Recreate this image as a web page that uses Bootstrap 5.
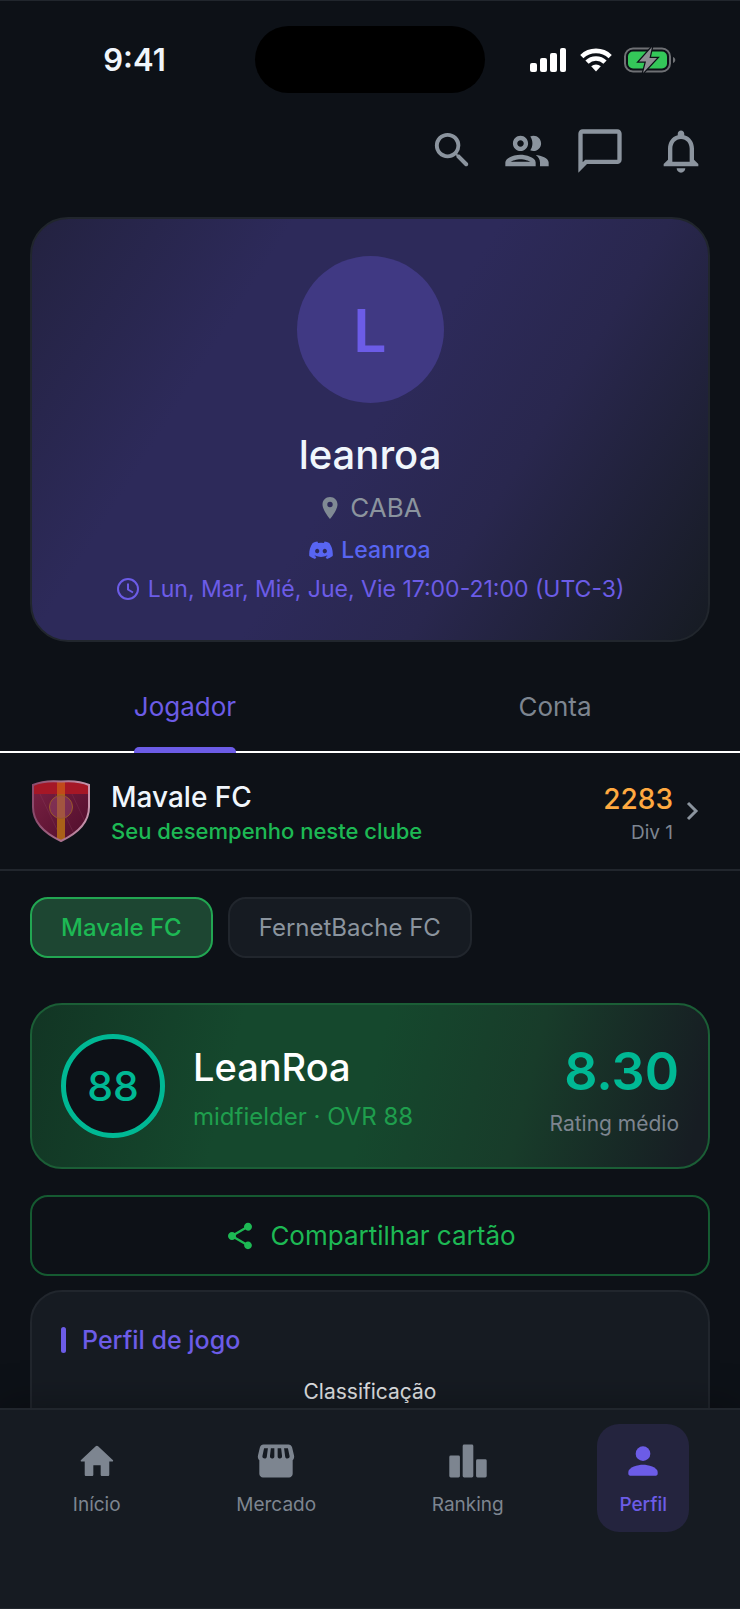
<!DOCTYPE html>
<html lang="pt-BR">
<head>
<meta charset="utf-8">
<meta name="viewport" content="width=device-width, initial-scale=1">
<title>Perfil</title>
<link href="https://cdn.jsdelivr.net/npm/bootstrap@5.3.0/dist/css/bootstrap.min.css" rel="stylesheet">
<style>
:root{--bg:#0d1117;--surface:#161b22;--line:#21262d;--accent:#6c5ce7;--muted:#8b949e;--dim:#7d8590;--green:#1db954;--teal:#00b894}
body{background:var(--bg);color:#f0f6fc;font-family:Inter,"Liberation Sans",sans-serif;font-size:24px;line-height:32px;border-top:1px solid var(--line)}
svg{display:block;flex:none}
button{font:inherit}
.gutter{padding-left:30px;padding-right:30px}
.t-accent{color:var(--accent)}.t-muted{color:var(--muted)}.t-dim{color:var(--dim)}.t-green{color:var(--green)}.t-teal{color:var(--teal)}
.w-5{font-weight:500}
.fs-xs{font-size:19px;line-height:24px}
.fs-s{font-size:21px;line-height:28px}
.fs-m{font-size:23px;line-height:32px}
.fs-l{font-size:26px;line-height:32px}
.fs-xl{font-size:28px;line-height:36px}
.status{height:117px;display:grid;grid-template-columns:1fr 230px 1fr}
.status .clock{font-size:31px;padding-left:14px}
.status .signals{padding-right:64px}
.island{height:67px;border-radius:34px;background:#000}
.tools{height:65px;padding-right:33px;gap:21px}
.tools button,.plain{background:none;border:0;padding:0}
.hero{margin-top:34px;height:425px;border:2px solid var(--line);border-radius:38px;padding-top:37px;background:linear-gradient(122deg,#232240 0%,#2d2a5a 28%,#2d2a5a 50%,#29274e 68%,#161b22 100%)}
.avatar{width:147px;height:147px;border-radius:50%;background:#403983;font-size:59px;line-height:149px}
.hero h1{font-size:40px;line-height:50px;margin:27px 0 12px}
.hero .discord{color:#5865f2;margin-top:10px}
.hero .hours{margin-top:7px}
.tabs{height:111px;border-bottom:2px solid #fff}
.tabs button{height:111px;position:relative;padding-top:19px}
.tabs .active::after{content:"";position:absolute;left:0;right:0;bottom:0;height:6px;border-radius:5px 5px 0 0;background:var(--accent)}
.club{height:118px;border-bottom:2px solid var(--line);padding-right:39px}
.club .crest{margin-right:20px}
.club .note{font-size:22px}
.chips{padding-top:26px;gap:15px}
.chip{height:61px;padding:0 29px;border:2px solid var(--line);border-radius:18px;background:var(--surface);color:var(--muted)}
.chip.on{border-color:#22a652;background:#1d4632;color:var(--green)}
.player{margin-top:45px;height:166px;padding:0 29px;border:2px solid #1b5e36;border-radius:32px;background:linear-gradient(104deg,#123524 0%,#15482d 30%,#15482d 50%,#183c2a 72%,#171d23 97%)}
.ovr{width:104px;height:104px;border:5px solid var(--teal);border-radius:50%;background:var(--bg);font-size:41px}
.player h2{font-size:38px;line-height:48px;margin:0 0 10px}
.score{font-size:52px;line-height:60px}
.share{margin-top:26px;height:81px;border:2px solid #155a31;border-radius:18px;background:transparent;color:var(--green);gap:14px}
.style-card{margin-top:14px;height:240px;border:2px solid var(--line);border-radius:32px;background:var(--surface);padding:32px 29px}
.style-card h3{font-size:25px;line-height:32px;gap:16px;margin:0 0 22px}
.style-card h3::before{content:"";width:5px;height:26px;border-radius:3px;background:var(--accent)}
.dock{height:201px;border-top:2px solid var(--line);border-bottom:1px solid var(--line);background:var(--surface);padding:14px 15px 0;box-shadow:0 -2px 40px rgba(0,0,0,.3)}
.dock a{height:108px;padding:15px 22px 0;border-radius:22px;color:var(--dim);text-decoration:none}
.dock a.on{background:#24243e;color:var(--accent)}
.dock span{margin-top:10px}
</style>
</head>
<body class="vh-100 d-flex flex-column overflow-hidden">
<main class="flex-fill overflow-hidden">
  <div class="status align-items-center">
    <div class="clock text-center fw-semibold">9:41</div>
    <div class="island"></div>
    <div class="signals d-flex justify-content-end align-items-center gap-2">
      <svg width="38" height="24" viewBox="0 0 38 24" fill="#fff"><rect x="0" y="15" width="7" height="9" rx="2"/><rect x="10" y="10" width="7" height="14" rx="2"/><rect x="20" y="5" width="7" height="19" rx="2"/><rect x="30" y="0" width="6" height="24" rx="2"/></svg>
      <svg class="ms-1" width="32" height="24" viewBox="0 0 32 24"><g fill="none" stroke="#fff" stroke-width="4.600"><path d="M1.800 8.600a20.500 20.500 0 0 1 28.400 0"/><path d="M7 14.200a12.800 12.800 0 0 1 18 0"/></g><path fill="#fff" d="M16 23.500l-4.800-5.200a7 7 0 0 1 9.600 0z"/></svg>
      <svg class="ms-1" width="52" height="26" viewBox="0 0 52 26"><rect x="1" y="1.500" width="45" height="23" rx="8" fill="none" stroke="#6e7074" stroke-width="2"/><path d="M49 10v6c3-.8 3-5.200 0-6z" fill="#6e7074"/><rect x="4" y="4.500" width="39" height="17" rx="5" fill="#34c759"/><path d="M28 0L15 14.500h7L19 26l14-15h-7.500z" fill="#8e8e93" stroke="#0d1117" stroke-width="2.500" paint-order="stroke"/></svg>
    </div>
  </div>

  <div class="tools d-flex justify-content-end align-items-center">
    <button class="me-1" aria-label="Buscar"><svg width="47" height="47" viewBox="0 0 24 24" fill="#8b949e"><path d="M15.500 14h-.790l-.280-.270A6.471 6.471 0 0 0 16 9.500 6.500 6.500 0 1 0 9.500 16c1.610 0 3.090-.590 4.230-1.570l.270.280v.790l4.260 4.250c.41.410 1.070.410 1.480 0 .41-.41.410-1.070 0-1.480L15.500 14zm-6 0C7.010 14 5 11.990 5 9.500S7.010 5 9.500 5 14 7.010 14 9.500 11.990 14 9.500 14z"/></svg></button>
    <button aria-label="Amigos"><svg width="52" height="52" viewBox="0 0 24 24" fill="#8b949e"><path d="M9 13.750c-2.340 0-7 1.170-7 3.500V19h14v-1.750c0-2.330-4.660-3.500-7-3.500zM4.340 17c.84-.58 2.870-1.250 4.660-1.250s3.820.670 4.660 1.250H4.340zM9 12c1.930 0 3.500-1.570 3.500-3.500S10.930 5 9 5 5.500 6.570 5.500 8.500 7.070 12 9 12zm0-5c.83 0 1.500.670 1.500 1.500S9.830 10 9 10s-1.500-.670-1.500-1.500S8.170 7 9 7zm7.040 6.810c1.160.840 1.960 1.960 1.960 3.440V19h4v-1.750c0-2.020-3.500-3.170-5.960-3.440zM15 12c1.930 0 3.500-1.570 3.500-3.500S16.930 5 15 5c-.54 0-1.040.130-1.500.350.630.890 1 1.980 1 3.150s-.370 2.260-1 3.150c.46.220.96.350 1.500.350z"/></svg></button>
    <button aria-label="Mensagens"><svg width="52" height="52" viewBox="0 0 24 24" fill="#8b949e"><path d="M20 2H4c-1.100 0-2 .900-2 2v18l4-4h14c1.100 0 2-.900 2-2V4c0-1.100-.900-2-2-2zm0 14H5.170L4 17.170V4h16v12z"/></svg></button>
    <button class="ms-2" aria-label="Notificações"><svg width="52" height="52" viewBox="0 0 24 24" fill="#8b949e"><path d="M12 22c1.100 0 2-.900 2-2h-4c0 1.100.890 2 2 2zm6-6v-5c0-3.070-1.640-5.640-4.500-6.320V4c0-.830-.670-1.500-1.500-1.500s-1.500.670-1.500 1.500v.680C7.630 5.360 6 7.920 6 11v5l-2 2v1h16v-1l-2-2zm-2 1H8v-6c0-2.480 1.510-4.500 4-4.500s4 2.020 4 4.500v6z"/></svg></button>
  </div>

  <div class="gutter">
    <section class="hero d-flex flex-column align-items-center">
      <div class="avatar text-center fw-semibold t-accent">L</div>
      <h1 class="w-5">leanroa</h1>
      <div class="fs-l t-muted d-flex align-items-center gap-2">
        <svg width="24" height="24" viewBox="0 0 24 24" fill="#808a94"><path d="M12 1C7.600 1 4.500 4.200 4.500 8.500 4.500 14.200 12 23 12 23s7.500-8.800 7.500-14.500C19.500 4.200 16.400 1 12 1zm0 10.200a2.700 2.700 0 1 1 0-5.400 2.700 2.700 0 0 1 0 5.400z"/></svg>
        <span>CABA</span>
      </div>
      <div class="discord fs-m w-5 d-flex align-items-center gap-2">
        <svg width="24" height="24" viewBox="0 0 24 24" fill="currentColor"><path d="M20.300 5.100A19 19 0 0 0 15.600 3.600l-.7 1.300a17 17 0 0 0-5.800 0l-.7-1.300a19 19 0 0 0-4.700 1.500C.7 9.500-.1 13.800.3 18.100a19 19 0 0 0 5.800 2.900l1.300-2-1.900-1 .5-.4a13.600 13.600 0 0 0 12 0l.5.4-1.900 1 1.300 2a19 19 0 0 0 5.800-2.900c.5-5-.800-9.300-3.400-13zM8.200 15.400c-1.200 0-2.100-1-2.100-2.300s.9-2.300 2.100-2.300 2.100 1 2.100 2.300-.9 2.300-2.100 2.300zm7.600 0c-1.200 0-2.100-1-2.100-2.300s.9-2.300 2.100-2.300 2.100 1 2.100 2.300-.9 2.300-2.100 2.300z"/></svg>
        <span>Leanroa</span>
      </div>
      <div class="hours fs-m t-accent d-flex align-items-center gap-2">
        <svg width="24" height="24" viewBox="0 0 24 24" fill="none" stroke="currentColor" stroke-width="2"><circle cx="12" cy="12" r="10"/><path d="M12 6.500V12.500l5 3"/></svg>
        <span>Lun, Mar, Mié, Jue, Vie 17:00-21:00 (UTC-3)</span>
      </div>
    </section>
  </div>

  <div class="tabs row g-0" role="tablist">
    <div class="col text-center"><button class="plain fs-l t-accent active" role="tab" aria-selected="true">Jogador</button></div>
    <div class="col text-center"><button class="plain fs-l t-dim" role="tab" aria-selected="false">Conta</button></div>
  </div>

  <div class="club gutter d-flex align-items-center">
    <svg class="crest" width="61" height="64" viewBox="0 0 61 64">
      <defs>
        <linearGradient id="rim" x1="0" x2="1"><stop stop-color="#8a4a6c"/><stop offset="1" stop-color="#c796ad"/></linearGradient>
        <linearGradient id="field" x1="0" y1="0" x2="1" y2="1"><stop stop-color="#7d2345"/><stop offset="1" stop-color="#4d0c2a"/></linearGradient>
        <clipPath id="shield"><path d="M3 6Q14 1 31 2.500Q48 1 59 6V28C59 45 46 55 31 62C16 55 3 45 3 28z"/></clipPath>
      </defs>
      <g clip-path="url(#shield)"><path fill="url(#field)" d="M0 0h61v64H0z"/><path fill="#a51726" d="M0 3h61v12H0z"/><path d="M10 15l22 46M25 15l22 46M42 15l16 34" stroke="#a05a78" stroke-opacity=".2"/><path fill="#a96018" d="M27 2h8v60h-8z"/><path fill="#c24a1a" d="M27 2h8v13h-8z"/></g>
      <circle cx="31" cy="28" r="11.500" fill="#9a4a70" fill-opacity=".45" stroke="#9a5a28"/>
      <path d="M3 6Q14 1 31 2.500Q48 1 59 6V28C59 45 46 55 31 62C16 55 3 45 3 28z" fill="none" stroke="url(#rim)" stroke-width="2"/>
    </svg>
    <div class="flex-fill pt-1">
      <div class="fs-xl w-5">Mavale FC</div>
      <div class="note w-5 t-green">Seu desempenho neste clube</div>
    </div>
    <div class="text-end pt-1">
      <div class="fs-xl w-5" style="color:#ffa940">2283</div>
      <div class="fs-xs t-dim mt-1">Div 1</div>
    </div>
    <svg class="ms-2" width="20" height="20" viewBox="0 0 20 20" fill="none" stroke="#8b949e" stroke-width="3"><path d="M7 2l8 8-8 8"/></svg>
  </div>

  <div class="gutter">
    <div class="chips d-flex">
      <button class="chip on w-5">Mavale FC</button>
      <button class="chip">FernetBache FC</button>
    </div>

    <section class="player d-flex align-items-center">
      <div class="ovr d-flex align-items-center justify-content-center w-5 t-teal">88</div>
      <div class="flex-fill ps-4 ms-1 pt-1">
        <h2 class="w-5 text-white">LeanRoa</h2>
        <div style="color:#1f9e4d">midfielder · OVR 88</div>
      </div>
      <div class="text-end pt-2">
        <div class="score fw-semibold t-teal">8.30</div>
        <div class="fs-s t-dim mt-2">Rating médio</div>
      </div>
    </section>

    <button class="share fs-l w-100 d-flex align-items-center justify-content-center">
      <svg width="32" height="32" viewBox="0 0 24 24" fill="currentColor"><path d="M18 16.080c-.76 0-1.440.300-1.960.770L8.910 12.700c.05-.23.090-.46.090-.700s-.04-.470-.09-.700l7.050-4.110c.54.500 1.250.810 2.040.810 1.660 0 3-1.340 3-3s-1.340-3-3-3-3 1.340-3 3c0 .24.040.470.090.700L8.040 9.810C7.500 9.310 6.790 9 6 9c-1.660 0-3 1.340-3 3s1.340 3 3 3c.79 0 1.500-.310 2.040-.810l7.120 4.160c-.05.210-.08.430-.08.650 0 1.610 1.310 2.920 2.920 2.920s2.920-1.310 2.920-2.920-1.310-2.920-2.920-2.920z"/></svg>
      Compartilhar cartão
    </button>

    <section class="style-card">
      <h3 class="d-flex align-items-center w-5 t-accent">Perfil de jogo</h3>
      <div class="fs-s text-center" style="color:#e2e4e6">Classificação</div>
    </section>
  </div>
</main>

<nav class="dock position-relative d-flex justify-content-around align-items-start flex-shrink-0">
  <a href="#inicio" class="fs-xs d-flex flex-column align-items-center"><svg width="44" height="44" viewBox="0 0 24 24" fill="currentColor"><path d="M10 19.500V14.300h4v5.200c0 .4.300.7.700.7h3.300c.4 0 .7-.3.700-.7V12.300h1.600c.5 0 .7-.600.3-.9L12.600 4a1 1 0 0 0-1.300 0l-8 7.400c-.4.300-.2.900.3.900h1.700v7.200c0 .4.300.7.700.7h3.300c.4 0 .7-.3.700-.7z"/></svg><span>Início</span></a>
  <a href="#mercado" class="fs-xs d-flex flex-column align-items-center"><svg width="44" height="44" viewBox="0 0 24 24" fill="currentColor"><path fill-rule="evenodd" d="M21.800 8.900l-1-4.300C20.500 3.600 19.700 3 18.800 3H5.200c-1 0-1.700.7-2 1.600l-1 4.300c-.3 1 0 2 .7 2.700V19c0 1.100.9 2 2 2h14.200c1.100 0 2-.9 2-2v-7.400c.7-.7 1-1.700.7-2.700zM7.600 5.100L7 9.500c-.1.700-.5 1.200-1.100 1.200-.9 0-1.500-.6-1.300-1.400l.9-4.200zm3.500 0v4.400c0 .7-.6 1.200-1.200 1.200-.8 0-1.300-.6-1.200-1.400l.5-4.200zm4.200 4.200c.1.800-.4 1.400-1.200 1.400-.6 0-1.200-.5-1.200-1.200V5.100h1.900zm2.800 1.400c-.6 0-1-.5-1.100-1.200l-.6-4.400h2.100l.9 4.200c.2.800-.4 1.400-1.300 1.400z"/></svg><span>Mercado</span></a>
  <a href="#ranking" class="fs-xs d-flex flex-column align-items-center"><svg width="44" height="44" viewBox="0 0 24 24" fill="currentColor"><rect x="1.800" y="9" width="5.800" height="12" rx=".8"/><rect x="9.100" y="3" width="5.800" height="18" rx=".8"/><rect x="16.400" y="11" width="5.800" height="10" rx=".8"/></svg><span>Ranking</span></a>
  <a href="#perfil" class="fs-xs w-5 d-flex flex-column align-items-center on" aria-current="page"><svg width="44" height="44" viewBox="0 0 24 24" fill="currentColor"><circle cx="12" cy="8" r="4"/><path d="M12 14c-2.670 0-8 1.340-8 4v1c0 .6.400 1 1 1h14c.6 0 1-.4 1-1v-1c0-2.660-5.330-4-8-4z"/></svg><span>Perfil</span></a>
</nav>
<script src="https://cdn.jsdelivr.net/npm/bootstrap@5.3.0/dist/js/bootstrap.bundle.min.js"></script>
</body>
</html>
